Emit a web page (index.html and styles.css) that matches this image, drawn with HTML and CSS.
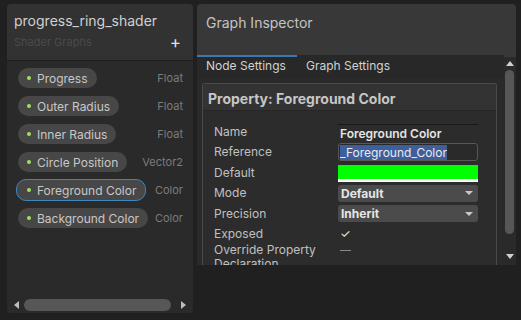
FILE: index.html
```html
<!DOCTYPE html>
<html>
<head>
<meta charset="utf-8">
<link rel="stylesheet" href="styles.css">
</head>
<body>
<div class="blackboard">
  <div class="bb-header">
    <div class="bb-title">progress_ring_shader</div>
    <div class="bb-sub-row">
      <span class="bb-sub">Shader Graphs</span>
      <span class="bb-plus">+</span>
    </div>
  </div>
  <div class="bb-list">
    <div class="bb-row"><span class="pill"><i class="dot"></i>Progress</span><span class="type">Float</span></div>
    <div class="bb-row"><span class="pill"><i class="dot"></i>Outer Radius</span><span class="type">Float</span></div>
    <div class="bb-row"><span class="pill"><i class="dot"></i>Inner Radius</span><span class="type">Float</span></div>
    <div class="bb-row"><span class="pill"><i class="dot"></i>Circle Position</span><span class="type">Vector2</span></div>
    <div class="bb-row"><span class="pill selected"><i class="dot"></i>Foreground Color</span><span class="type">Color</span></div>
    <div class="bb-row"><span class="pill"><i class="dot"></i>Background Color</span><span class="type">Color</span></div>
  </div>
  <div class="hscroll">
    <span class="arr-left"></span>
    <span class="hthumb"></span>
    <span class="arr-right"></span>
  </div>
</div>
<div class="inspector">
  <div class="gi-header">Graph Inspector</div>
  <div class="gi-main">
    <div class="gi-content">
      <div class="tabs">
        <div class="tab active">Node Settings</div>
        <div class="tab">Graph Settings</div>
      </div>
      <div class="prop-box">
        <div class="prop-title">Property: Foreground Color</div>
        <div class="prop-rows">
          <div class="prow r20"><span class="lbl">Name</span><span class="val name-val">Foreground Color</span></div>
          <div class="prow r20"><span class="lbl">Reference</span><span class="val field"><span class="sel">_Foreground_Color</span></span></div>
          <div class="prow r21"><span class="lbl">Default</span><span class="val swatch"></span></div>
          <div class="prow r20"><span class="lbl">Mode</span><span class="val dropdown">Default<i class="tri"></i></span></div>
          <div class="prow r21"><span class="lbl">Precision</span><span class="val dropdown">Inherit<i class="tri"></i></span></div>
          <div class="prow r19"><span class="lbl">Exposed</span><span class="val check">&#10003;</span></div>
          <div class="prow tall"><span class="lbl">Override Property Declaration</span><span class="val dash"></span></div>
        </div>
      </div>
    </div>
    <div class="vscroll">
      <span class="arr-up"></span>
      <span class="vthumb"></span>
      <span class="arr-down"></span>
    </div>
  </div>
</div>
</body>
</html>
```
FILE: styles.css
```css
html, body {
  margin: 0;
  padding: 0;
  width: 521px;
  height: 320px;
  overflow: hidden;
  background: #202020;
  font-family: Inter, "Noto Sans", sans-serif;
}
body {
  display: flex;
  align-items: flex-start;
  gap: 4px;
  padding: 4px 0 0 7px;
  box-sizing: border-box;
}
.blackboard {
  width: 186px;
  height: 309px;
  background: #2a2a2a;
  border-radius: 4px;
  display: flex;
  flex-direction: column;
  overflow: hidden;
}
.bb-header {
  background: #323232;
  border-bottom: 1px solid #1d1d1d;
  padding: 8px 10px 0 7px;
  box-sizing: content-box;
  height: 48px;
}
.bb-title {
  font-size: 14px;
  color: #d0d0d0;
  line-height: 18px;
}
.bb-sub-row {
  display: flex;
  justify-content: space-between;
  align-items: center;
  margin-top: 4px;
}
.bb-sub {
  font-size: 11px;
  color: #4a4a4a;
}
.bb-plus {
  font-size: 17px;
  color: #e0e0e0;
  line-height: 16px;
  margin-right: 2px;
}
.bb-list {
  flex: 1;
  padding: 3px 10px 0 11px;
}
.bb-row {
  height: 28px;
  display: flex;
  align-items: center;
  justify-content: space-between;
}
.pill {
  display: flex;
  align-items: center;
  height: 20px;
  padding: 0 9px 0 9px;
  background: #474747;
  border-radius: 10px;
  font-size: 12px;
  color: #c8c8c8;
  box-sizing: border-box;
}
.pill.selected {
  border: 1px solid #3e86be;
  height: 22px;
  margin-left: -2px;
  padding-left: 10px;
}
.dot {
  width: 4px;
  height: 4px;
  border-radius: 50%;
  background: #9fe05a;
  margin-right: 6px;
}
.type {
  font-size: 11px;
  color: #7c7c7c;
}
.hscroll {
  height: 14px;
  margin: 0 0 1px 0;
  display: flex;
  align-items: center;
  padding: 0 4px;
  gap: 5px;
}
.arr-left, .arr-right {
  width: 0;
  height: 0;
  border-top: 4px solid transparent;
  border-bottom: 4px solid transparent;
}
.arr-left { border-right: 5px solid #bdbdbd; margin-left: 3px; }
.arr-right { border-left: 5px solid #bdbdbd; margin-right: 3px; }
.hthumb {
  flex: 1;
  height: 12px;
  background: #575757;
  border-radius: 6px;
  margin-right: 5px;
}
.inspector {
  width: 319px;
  height: 261px;
  background: #2a2a2a;
  border-radius: 4px 4px 0 0;
  display: flex;
  flex-direction: column;
  overflow: hidden;
}
.gi-header {
  height: 51px;
  background: #383838;
  color: #c4c4c4;
  font-size: 14px;
  padding: 10px 0 0 9px;
  box-sizing: border-box;
}
.gi-main {
  flex: 1;
  display: flex;
  min-height: 0;
  border-top: 2px solid #3a3a3a;
}
.gi-content {
  flex: 1;
  display: flex;
  flex-direction: column;
  min-width: 0;
}
.tabs {
  display: flex;
  height: 23px;
  background: #282828;
  margin-top: -2px;
}
.tab {
  font-size: 12px;
  color: #d2d2d2;
  padding: 0 9px;
  line-height: 17px;
  border-top: 2px solid transparent;
}
.tab.active {
  border-top-color: #3a78b5;
  width: 100px;
  box-sizing: border-box;
}
.prop-box {
  margin: 5px 7px 0 5px;
  border: 1px solid #4a4a4a;
  border-bottom: none;
  border-radius: 3px 3px 0 0;
  flex: 1;
  background: #2c2c2c;
  min-height: 0;
  overflow: hidden;
}
.prop-title {
  height: 27px;
  background: #333333;
  font-size: 14px;
  font-weight: 700;
  color: #c6c6c6;
  padding: 6px 0 0 5px;
  box-sizing: border-box;
  border-bottom: 1px solid #262626;
}
.prop-rows {
  padding: 11px 0 0 11px;
}
.prow {
  display: flex;
  align-items: center;
}
.r19 { height: 19px; }
.r20 { height: 20px; }
.r21 { height: 21px; }
.prow.tall {
  align-items: flex-start;
  height: 32px;
}
.lbl {
  width: 124px;
  font-size: 12px;
  color: #c0c0c0;
  line-height: 14px;
  flex-shrink: 0;
}
.val {
  width: 140px;
  box-sizing: border-box;
  font-size: 12px;
}
.name-val {
  color: #e4e4e4;
  font-weight: 600;
  border-top: 1px solid #1a1a1a;
  padding: 1px 0 0 2px;
}
.field {
  height: 18px;
  border: 1px solid #585858;
  border-radius: 3px;
  background: #2a2a2a;
  display: flex;
  align-items: center;
  padding-left: 1px;
}
.sel {
  background: #3d5f9c;
  color: #eaeaea;
  line-height: 15px;
}
.swatch {
  height: 17px;
  background: #00ff00;
  border-bottom: 3px solid #ffffff;
  margin-top: 1px;
}
.dropdown {
  height: 17px;
  background: #4b4b4b;
  border-radius: 3px;
  color: #e6e6e6;
  font-weight: 700;
  padding-left: 3px;
  display: flex;
  align-items: center;
  justify-content: space-between;
  padding-right: 5px;
}
.tri {
  width: 0;
  height: 0;
  border-left: 4px solid transparent;
  border-right: 4px solid transparent;
  border-top: 4px solid #c8c8c8;
}
.check {
  color: #e8e8e8;
  font-size: 12px;
  padding-left: 2px;
}
.dash {
  width: 11px;
  height: 1px;
  background: #8a8a8a;
  margin-top: 7px;
  margin-left: 2px;
}
.vscroll {
  width: 11px;
  margin-right: 1px;
  display: flex;
  flex-direction: column;
  align-items: center;
  padding: 4px 0 6px;
  box-sizing: border-box;
  gap: 4px;
  background: #2a2a2a;
}
.arr-up, .arr-down {
  width: 0;
  height: 0;
  border-left: 4px solid transparent;
  border-right: 4px solid transparent;
}
.arr-up { border-bottom: 5px solid #d0d0d0; }
.arr-down { border-top: 5px solid #d0d0d0; margin-top: auto; }
.vthumb {
  width: 9px;
  height: 164px;
  background: #575757;
  border-radius: 5px;
}
```
